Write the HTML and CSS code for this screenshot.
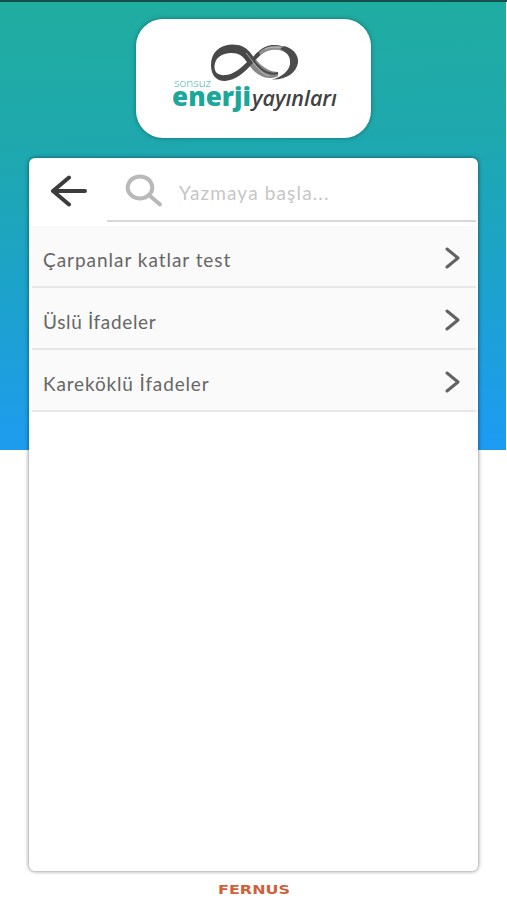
FILE: index.html
```
<!DOCTYPE html>
<html lang="tr">
<head>
    <meta charset="UTF-8">
    <meta name="viewport" content="width=device-width, initial-scale=1.0">
    <title>Sonsuz Enerji Yayınları</title>
    <link rel="stylesheet" href="styles.css">
</head>
<body>
    <header class="logo-box">
        <svg class="logo" width="180" height="85" viewBox="0 0 180 85">
            <!-- brush stroke infinity -->
            <path fill="#888" d="M72 10 C82 11 87 20 93 27 C100 34 107 37 113 37 L113 41 C106 45 97 43 90 37 C83 31 79 19 70 15 Z"/>
            <path fill="#484848" fill-rule="evenodd" d="M88 22 C83 13 76 9.500 67 9.500 C54 10 46 18 46 30 C46 40 51 46 60 46 C71 45 79 38 87 29 C94 21 100 15 109 13 C116 12 121 13 125 17 C120 11 113 9.500 107 10 C99 11 94 15 88 22 Z M82 27 C76 33 69 39 61 40 C53 41 49 37 49.500 31 C50 23 57 18 66 18 C74 18 78 21 82 27 Z"/>
            <path fill="#909090" d="M94 17 C104 8 119 9 129 18 L124 20 C116 13 105 13 95 20 Z"/>
            <path fill="none" stroke="#4c4c4c" stroke-width="2" d="M76 13 C86 18 90 32 101 37 C106 39 110 39 113 38"/>
            <path fill="none" stroke="#ccc" stroke-width="0.700" d="M81 18 C87 24 92 37 104 41 M100 14 C110 10 119 13 125 18"/>
            <path fill="#4c4c4c" d="M119 11 C128 13 134 20 133 28 C131 38 121 45 107 44.500 C117 42 124 36 125 29 C126 22 122 17 115 14 Z"/>
            <text class="logo-small" x="9" y="52" textLength="37" lengthAdjust="spacingAndGlyphs">sonsuz</text>
            <text class="logo-main" x="7" y="70.500" textLength="79" lengthAdjust="spacingAndGlyphs">enerji</text>
            <text class="logo-side" x="87" y="71" textLength="85" lengthAdjust="spacingAndGlyphs">yayınları</text>
        </svg>
    </header>

    <main class="panel">
        <div class="search-bar">
            <svg class="back" width="36" height="32" viewBox="0 0 36 32">
                <path d="M34 16 H2 M18 2.500 L2 16 L18 29.500"/>
            </svg>
            <div class="search-field">
                <svg class="search-icon" width="38" height="34" viewBox="0 0 38 34">
                    <ellipse cx="15" cy="13.500" rx="12.300" ry="11"/>
                    <path d="M24.500 21.500 L35 30.500"/>
                </svg>
                <span class="placeholder">Yazmaya başla...</span>
            </div>
        </div>
        <ul class="topics">
            <li>
                <span class="t1">Çarpanlar katlar test</span>
                <svg class="chevron" width="16" height="22" viewBox="0 0 16 22"><path d="M2 2 L13 11 L2 20"/></svg>
            </li>
            <li>
                <span class="t2">Üslü İfadeler</span>
                <svg class="chevron" width="16" height="22" viewBox="0 0 16 22"><path d="M2 2 L13 11 L2 20"/></svg>
            </li>
            <li>
                <span class="t3">Kareköklü İfadeler</span>
                <svg class="chevron" width="16" height="22" viewBox="0 0 16 22"><path d="M2 2 L13 11 L2 20"/></svg>
            </li>
        </ul>
    </main>

    <footer>
        <svg width="74" height="14" viewBox="0 0 74 14">
            <text class="fernus" x="1" y="11.500" textLength="72" lengthAdjust="spacingAndGlyphs">FERNUS</text>
        </svg>
    </footer>
</body>
</html>
```
FILE: styles.css
```
* {
    box-sizing: border-box;
}

body {
    margin: 0;
    height: 900px;
    overflow: hidden;
    display: flex;
    flex-direction: column;
    align-items: center;
    border-top: 2px solid #164f4c;
    font-family: Lato, "Liberation Sans", sans-serif;
    background: linear-gradient(178deg, #20ad9f 0%, #1ea8ae 32%, #1ca3c8 60%, #1d9bf3 100%) no-repeat #fff;
    background-size: 506px 450px;
}

.logo-box {
    width: 235px;
    height: 119px;
    margin: 17px 0 0 0;
    padding: 16px 0 0 29px;
    border-radius: 27px;
    background: #fff;
    box-shadow: 0 0 4px rgba(0, 50, 50, 0.5);
}

.logo {
    display: block;
}

.logo-small {
    font: 300 11px "Open Sans", sans-serif;
    fill: #3bb1a7;
}

.logo-main {
    font: 800 26px "Open Sans", sans-serif;
    fill: #1ba79a;
}

.logo-side {
    font: italic 600 21px "Open Sans", sans-serif;
    fill: #414141;
}

.panel {
    width: 449px;
    height: 713px;
    margin-top: 20px;
    padding: 0 2px 0 3px;
    border-radius: 6px;
    background: #fff;
    box-shadow: 0 0 4px rgba(0, 0, 0, 0.55);
}

.search-bar {
    display: flex;
    height: 64px;
    padding-left: 19px;
}

.back {
    margin: 17px 20px 0 0;
    fill: none;
    stroke: #3c3c3c;
    stroke-width: 4;
    stroke-linecap: round;
    stroke-linejoin: round;
}

.search-field {
    flex: 1;
    display: flex;
    border-bottom: 2px solid #d8d8d8;
    padding-left: 18px;
}

.search-icon {
    margin-top: 16px;
    fill: none;
    stroke: #b9b9b9;
    stroke-width: 4;
    stroke-linecap: round;
}

.placeholder {
    margin: 23px 0 0 16px;
    font-size: 19px;
    line-height: 24px;
    letter-spacing: 1.15px;
    color: #c6c6c6;
}

.topics {
    list-style: none;
    margin: 4px 0 0;
    padding: 0;
}

.topics li {
    display: flex;
    justify-content: space-between;
    align-items: center;
    height: 62px;
    padding: 7px 15px 0 11px;
    border-bottom: 2px solid #e7e7e7;
    background: #fafafa;
    font-size: 19px;
    color: #666;
}

.t1 {
    letter-spacing: 0.97px;
}

.t2 {
    letter-spacing: 0.65px;
}

.t3 {
    letter-spacing: 0.85px;
}

.chevron {
    margin-top: -4px;
    fill: none;
    stroke: #626262;
    stroke-width: 3;
    stroke-linecap: round;
    stroke-linejoin: round;
}

footer {
    height: 14px;
    margin-top: 11px;
}

footer svg {
    display: block;
}

.fernus {
    font: 700 12px "DejaVu Sans", sans-serif;
    fill: #d1603a;
}
```
